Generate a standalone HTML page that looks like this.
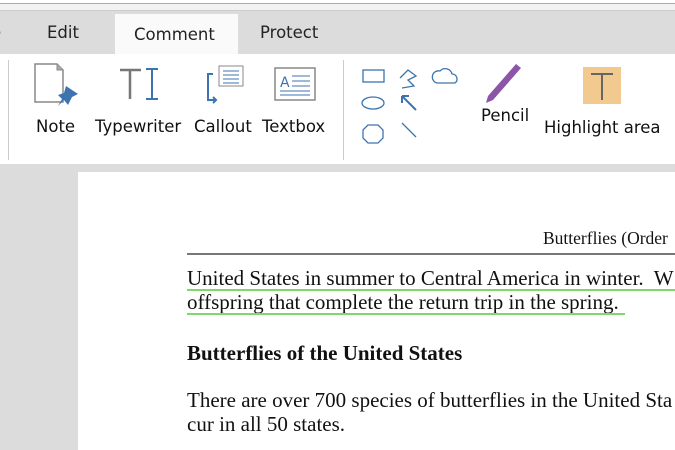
<!DOCTYPE html>
<html><head><style>
body{margin:0;width:675px;height:450px;overflow:hidden;background:#dcdcdc;position:relative;font-family:"DejaVu Sans","Liberation Sans",sans-serif}
.a{position:absolute;white-space:nowrap}
.t{font-size:16.5px;color:#222}
.l{font-size:16.5px;color:#111}
.s{font-family:"Liberation Serif",serif;color:#111}
</style></head><body>
<div class="a" style="left:0;top:0;width:675px;height:11px;background:#f2f2f2;border-top:3px solid #fff;box-sizing:border-box"></div>
<div class="a" style="left:0;top:3px;width:675px;height:1px;background:#aaa"></div>
<div class="a" style="left:0;top:10px;width:675px;height:1px;background:#ccc"></div>
<div class="a" style="left:115px;top:14px;width:123px;height:41px;background:#fafafa"></div>
<div class="a t" style="left:-9px;top:23px">e</div>
<div class="a t" style="left:47px;top:23px">Edit</div>
<div class="a t" style="left:134px;top:25px">Comment</div>
<div class="a t" style="left:260px;top:23px">Protect</div>
<div class="a" style="left:0;top:54px;width:675px;height:110px;background:#fff"></div>
<div class="a" style="left:8px;top:60px;width:1px;height:100px;background:#ccc"></div>
<div class="a" style="left:343px;top:60px;width:1px;height:100px;background:#ccc"></div>
<svg class="a" style="left:0;top:54px" width="675" height="110">
<path d="M35 10h22l6 6v32h-28z" fill="none" stroke="#888" stroke-width="1.5"/>
<path d="M57 10v6h6" fill="#aaa" stroke="#888"/>
<path d="M66 32l12 8-6 3-4 8-4-5-6 6 4-7-4-4 6-2z" fill="#3d74b0"/>
<path d="M120 16h21M130 16v29" stroke="#777" stroke-width="2.5"/>
<path d="M146 15h12M152 15v30M146 45h12" stroke="#3d74b0" stroke-width="2"/>
<rect x="219" y="12" width="24" height="20" fill="#fff" stroke="#888"/>
<path d="M223 17h16M223 21h16M223 25h16M223 29h16" stroke="#3d74b0"/>
<path d="M213 20h-5v26h8M213 43l3 3-3 3" fill="none" stroke="#3d74b0" stroke-width="2"/>
<rect x="275" y="14" width="40" height="32" fill="#fff" stroke="#888" stroke-width="1.5"/>
<text x="280" y="33" font-size="14" fill="#3d74b0" font-family="DejaVu Sans">A</text>
<path d="M292 22h18M292 27h18M292 32h18M280 37h30M280 41h30" stroke="#3d74b0"/>
<g fill="none" stroke="#3d74b0" stroke-width="1.3">
<rect x="363" y="16" width="21" height="12"/>
<ellipse cx="373" cy="49" rx="11" ry="6"/>
<path d="M368 71h10l5 5v8l-5 5h-10l-5-5v-8z"/>
<path d="M400 24l8-8 8 6-8 4 6 6-12 2"/>
<path d="M402 42l14 14M402 42v7M402 42h7" stroke-width="2"/>
<path d="M402 69l14 14"/>
<path d="M437 29h18a5 5 0 0 0-3-9 7 7 0 0 0-12-3 6 6 0 0 0-3 12z"/>
</g>
<path d="M488 42l28-32 5 4-28 32-7 3z" fill="#8b55a8"/>
<rect x="583" y="13" width="38" height="37" fill="#f2c98e"/>
<path d="M591 20h22M602 20v26" stroke="#666" stroke-width="2"/>
</svg>
<div class="a l" style="left:36px;top:117px">Note</div>
<div class="a l" style="left:95px;top:117px">Typewriter</div>
<div class="a l" style="left:194px;top:117px">Callout</div>
<div class="a l" style="left:262px;top:117px">Textbox</div>
<div class="a l" style="left:481px;top:106px">Pencil</div>
<div class="a l" style="left:544px;top:118px">Highlight area</div>
<div class="a" style="left:78px;top:172px;width:597px;height:278px;background:#fff"></div>
<div class="a s" style="left:543px;top:228px;font-size:17.5px">Butterflies (Order</div>
<div class="a" style="left:187px;top:253px;width:488px;height:2px;background:#777"></div>
<div class="a s" style="left:187px;top:266px;font-size:21px;line-height:24px">United States in summer to Central America in winter.&nbsp; W<br>offspring that complete the return trip in the spring.</div>
<div class="a" style="left:187px;top:289px;width:488px;height:2px;background:#7ed86a"></div>
<div class="a" style="left:187px;top:313px;width:438px;height:2px;background:#7ed86a"></div>
<div class="a s" style="left:187px;top:341px;font-size:21px;font-weight:bold">Butterflies of the United States</div>
<div class="a s" style="left:187px;top:388px;font-size:21px;line-height:24px">There are over 700 species of butterflies in the United Sta<br>cur in all 50 states.</div>
</body></html>
